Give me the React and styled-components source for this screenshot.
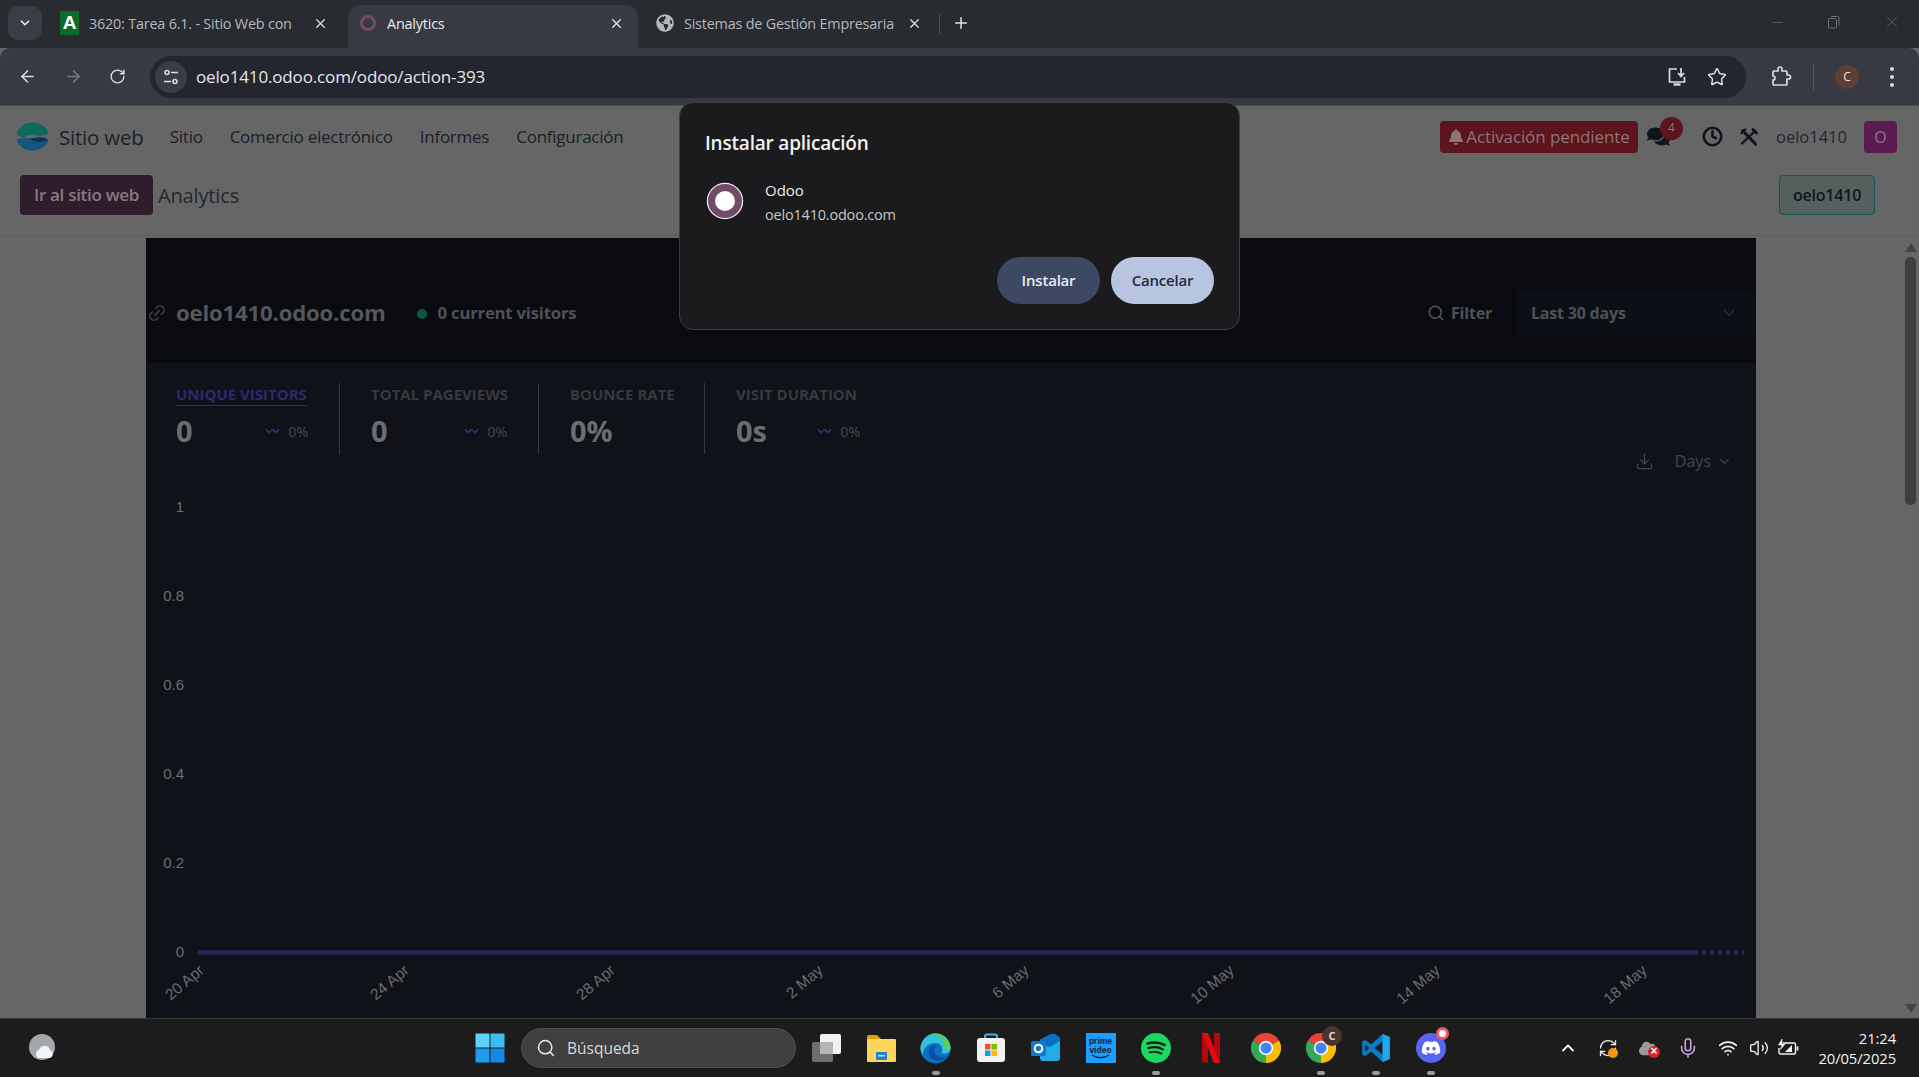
import React from "react";
import styled, { createGlobalStyle } from "styled-components";
import { ArrowLeft, ArrowRight, RotateCw, Star, X, Plus, ChevronDown, ChevronUp, Search, Download, Link2, Minus, Mic, Wifi, Volume2, RefreshCw } from "lucide-react";
import { FaBell, FaComments, FaGlobeAmericas, FaCloud, FaDiscord } from "react-icons/fa";
import { FiClock } from "react-icons/fi";

const GlobalStyle = createGlobalStyle`
    html, body, #root {
        margin: 0;
        height: 100%;
        overflow: hidden;
    }
    body {
        font-family: "Open Sans", "Noto Sans", sans-serif;
        background: #666;
    }
    * {
        box-sizing: border-box;
    }
`;

const DATES = [
    ["20 Apr", 59],
    ["24 Apr", 264],
    ["28 Apr", 470],
    ["2 May", 678],
    ["6 May", 884],
    ["10 May", 1089],
    ["14 May", 1295],
    ["18 May", 1502],
];
const TICKS = [
    ["1", 31],
    ["0.8", 120],
    ["0.6", 209],
    ["0.4", 298],
    ["0.2", 387],
    ["0", 476],
];

const WebsiteLogo = () => (
    <svg width="33" height="33" viewBox="0 0 32 32">
        <path d="M0.6 13A16 15 0 0 1 31.4 13C26 17 21 14.5 16 14.5 10 14.5 6 18 0.6 13Z" fill="#0d6a5e" />
        <path d="M1 13.4C5 16.6 8 16 11 15.2 8 16.6 5 17.4 1 13.4Z" fill="#0b3a3a" />
        <path d="M0.6 19.5C6 15.5 11 18 16 18 21 18 26 14.5 31.4 19.5A16 14 0 0 1 0.6 19.5Z" fill="#13577c" />
        <path d="M13 17.8C18 18.2 24 14.6 31.4 19.5 25 22.5 18 22 13 17.8Z" fill="#0e2f58" />
    </svg>
);
const TuneIcon = () => (
    <svg width="18" height="18" viewBox="0 0 18 18" fill="none" stroke="#d8dbe2" strokeWidth="1.6">
        <circle cx="5" cy="4.5" r="2" />
        <path d="M9 4.5h7M2 13.5h7" />
        <circle cx="13" cy="13.5" r="2" />
    </svg>
);
const InstallIcon = () => (
    <svg width="22" height="22" viewBox="0 0 22 22" fill="none" stroke="#d8dbe2" strokeWidth="1.7">
        <path d="M11 3H3.5v13h15v-5" />
        <path d="M15 2v8M12 7l3 3.4L18 7" />
        <path d="M7.5 18.5h7" strokeWidth="2.4" />
    </svg>
);
const ExtensionIcon = () => (
    <svg width="24" height="24" viewBox="0 0 24 24" fill="none" stroke="#d8dbe2" strokeWidth="1.7">
        <path d="M5 6h4V4a2 2 0 0 1 4 0v2h4a1 1 0 0 1 1 1v3h1.5a2 2 0 0 1 0 4H18v5a1 1 0 0 1-1 1H5a1 1 0 0 1-1-1v-4a2 2 0 0 0 0-4V7a1 1 0 0 1 1-1z" />
    </svg>
);
const RestoreIcon = () => (
    <svg width="14" height="14" viewBox="0 0 14 14" fill="none" stroke="#6d6f74" strokeWidth="1">
        <rect x="1.5" y="3.5" width="8" height="9.5" rx="1" />
        <path d="M4 1.5h6.5a1.5 1.5 0 0 1 1.5 1.5v7.5" />
    </svg>
);
const RingFavicon = () => (
    <svg width="18" height="18" viewBox="0 0 18 18" fill="none">
        <circle cx="9" cy="9" r="6.6" stroke="#714b67" strokeWidth="3" />
    </svg>
);
const AppIcon = () => (
    <svg width="38" height="38" viewBox="0 0 38 38">
        <circle cx="19" cy="19" r="18.2" fill="#f1eff0" />
        <circle cx="19" cy="19" r="17" fill="#714b67" />
        <circle cx="19" cy="19" r="10" fill="#fff" />
    </svg>
);
const ToolsIcon = () => (
    <svg width="20" height="20" viewBox="0 0 20 20" fill="none" stroke="#10141d" strokeLinecap="round">
        <path d="M5 5L16.500 17" strokeWidth="3.200" />
        <path d="M2.500 6.500L3.500 3.500 6.500 2.500" strokeWidth="2" />
        <path d="M15.500 4.500L3 16.500" strokeWidth="2.400" />
        <path d="M14 2.500L17.500 6" strokeWidth="3" />
    </svg>
);
const Squiggle = () => (
    <svg width="15" height="6" viewBox="0 0 15 6" fill="none" stroke="#3a2f78" strokeWidth="1.6">
        <path d="M1 1.5 L4 4.5 L7.5 1.5 L11 4.5 L14 1.5" />
    </svg>
);
const WeatherIcon = () => (
    <svg width="28" height="28" viewBox="0 0 28 28">
        <circle cx="14" cy="13" r="13" fill="#a4a7ad" />
        <path d="M10 24h11a4 4 0 0 0 1-7.8 5.5 5.5 0 0 0-10.5-1A5 5 0 0 0 10 24z" fill="#f2f3f5" />
    </svg>
);
const WindowsIcon = () => (
    <svg width="30" height="30" viewBox="0 0 30 30">
        <rect x="0.5" y="0.5" width="14" height="14" fill="#5fd3f7" />
        <rect x="15.5" y="0.5" width="14" height="14" fill="#3cbdf3" />
        <rect x="0.5" y="15.5" width="14" height="14" fill="#1e9bee" />
        <rect x="15.5" y="15.5" width="14" height="14" fill="#1489e6" />
    </svg>
);
const TaskViewIcon = () => (
    <svg width="30" height="30" viewBox="0 0 30 30">
        <rect x="1" y="9" width="21" height="20" rx="2" fill="#6e6e6e" />
        <rect x="9" y="1" width="21" height="20" rx="2" fill="#f1f1f1" />
        <rect x="9" y="9" width="13" height="12" fill="#b5b5b5" />
    </svg>
);
const FolderIcon = () => (
    <svg width="30" height="30" viewBox="0 0 30 30">
        <path d="M1 4a2 2 0 0 1 2-2h8l4 4v6H1z" fill="#e0a006" />
        <rect x="1" y="6" width="29" height="23" rx="1" fill="#fdd55a" />
        <rect x="11" y="19" width="19" height="8" fill="#fdd55a" />
        <rect x="10" y="19" width="11" height="8" rx="1" fill="#1b82d8" />
        <rect x="12" y="22" width="7" height="1.5" fill="#bfe2fb" />
    </svg>
);
const EdgeIcon = () => (
    <svg width="31" height="31" viewBox="0 0 32 32">
        <circle cx="16" cy="16" r="15.5" fill="#0f6fc5" />
        <path d="M0.5 16A15.5 15.5 0 0 1 31.5 16C31.5 21 26 22 22 21 25 17 22 9.5 14 10.5 7 11.5 3 16 3 23 1.5 21 0.5 18.500 0.5 16Z" fill="#33c2d6" />
        <path d="M31.5 16A15.5 15.5 0 0 0 10 1.600C18 0 26 5 24 13 26 18 31 18.500 31.500 16Z" fill="#5cd05c" />
        <path d="M9 20C9 15 13 12.500 17 13 14 14.500 13.500 19 16 22 19 25.500 25 25.500 28 24 22 32 9 29 9 20Z" fill="#0a4fa0" />
    </svg>
);
const StoreIcon = () => (
    <svg width="30" height="30" viewBox="0 0 30 30">
        <path d="M9 6V3.500A2 2 0 0 1 11 1.500h8a2 2 0 0 1 2 2V6" fill="none" stroke="#3fb5e8" strokeWidth="2" />
        <rect x="1" y="5" width="28" height="24" rx="3" fill="#f2f2f2" />
        <rect x="9" y="11" width="5.500" height="5.500" fill="#f25022" />
        <rect x="15.500" y="11" width="5.500" height="5.500" fill="#7fba00" />
        <rect x="9" y="17.500" width="5.500" height="5.500" fill="#00a4ef" />
        <rect x="15.500" y="17.500" width="5.500" height="5.500" fill="#ffb900" />
    </svg>
);
const OutlookIcon = () => (
    <svg width="31" height="30" viewBox="0 0 31 30">
        <path d="M10 7L21 1h4l5 4v20a3 3 0 0 1-3 3H13a3 3 0 0 1-3-3z" fill="#28a8ea" />
        <path d="M10 7L21 1h4l5 4v3L20 14 10 12z" fill="#0a6fc4" />
        <path d="M18 16l12-8v6l-12 8z" fill="#14b5e0" />
        <rect x="1" y="8" width="15" height="15" rx="1.500" fill="#0f78d4" />
        <circle cx="8.500" cy="15.500" r="3.800" fill="none" stroke="#fff" strokeWidth="2" />
    </svg>
);
const SpotifyIcon = () => (
    <svg width="30" height="30" viewBox="0 0 30 30" fill="none" stroke="#16201a" strokeLinecap="round">
        <circle cx="15" cy="15" r="15" fill="#1ed760" stroke="none" />
        <path d="M6.500 10.500c6-1.700 12-1.200 17 1.500" strokeWidth="2.600" />
        <path d="M7.500 15c5-1.300 10.500-.8 14.500 1.500" strokeWidth="2.200" />
        <path d="M8.500 19.300c4.500-1 8.500-.6 12 1.300" strokeWidth="1.800" />
    </svg>
);
const NetflixIcon = () => (
    <svg width="18" height="30" viewBox="0 0 18 30">
        <path d="M0 0h6v30L0 29z" fill="#b20710" />
        <path d="M12 0h6v29l-6 1z" fill="#b20710" />
        <path d="M0 0h6l12 30h-6z" fill="#e50914" />
    </svg>
);
const ChromeIcon = () => (
    <svg width="30" height="30" viewBox="0 0 48 48">
        <path d="M24 24L3.200 12A24 24 0 0 1 44.800 12Z" fill="#ea4335" />
        <path d="M24 24L44.800 12A24 24 0 0 1 24 48Z" fill="#fbbc04" />
        <path d="M24 24L24 48A24 24 0 0 1 3.200 12Z" fill="#34a853" />
        <circle cx="24" cy="24" r="11.500" fill="#fff" />
        <circle cx="24" cy="24" r="9" fill="#4285f4" />
    </svg>
);
const VsCodeIcon = () => (
    <svg width="30" height="30" viewBox="0 0 100 100">
        <path fillRule="evenodd" d="M72 3L96 13V87L72 97 34 62 14 77 4 72V28L14 23 34 38ZM72 29L44 50 72 71ZM14 37V63L27 50Z" fill="#0a7cc4" />
        <path d="M72 3L96 13V87L72 97Z" fill="#22a5ee" />
    </svg>
);
const BatteryIcon = () => (
    <svg width="22" height="20" viewBox="0 0 22 20" fill="none" stroke="#f2f2f2" strokeWidth="1.400">
        <path d="M6 5H17a1.500 1.500 0 0 1 1.500 1.500v8A1.500 1.500 0 0 1 17 16H3.500A1.500 1.500 0 0 1 2 14.500V10" />
        <path d="M20.500 8.500v4" strokeWidth="1.800" />
        <path d="M5 1L1.500 7h3.500L3.500 11.500 8 6H5z" fill="#f2f2f2" strokeWidth="0.600" />
        <path d="M8 14l7-7v7z" fill="#f2f2f2" stroke="none" />
    </svg>
);
const PrimeIcon = () => (
    <PrimeBox>
        <span>prime</span>
        <span>video</span>
        <svg width="20" height="5" viewBox="0 0 20 5" fill="none" stroke="#0f1e33" strokeWidth="1.200">
            <path d="M1 1c5 3.500 12 3.500 17 0" />
        </svg>
    </PrimeBox>
);
const DiscordIcon = () => (
    <DiscordCircle>
        <FaDiscord size={20} color="#fff" />
    </DiscordCircle>
);

const App = () => {
    return (
        <Screen>
            <GlobalStyle />
            <TabStrip>
                <TabScroller>
                    <ChevronDown size={14} strokeWidth={3} color="#e3e5ea" />
                </TabScroller>
                <Tab $width={299} $left={11} $right={20}>
                    <LetterFavicon>A</LetterFavicon>
                    <TabTitle>3620: Tarea 6.1. - Sitio Web con</TabTitle>
                    <X size={15} strokeWidth={2.2} color="#d8dbe2" />
                </Tab>
                <Tab $width={290} $left={11} $right={14} $active>
                    <RingFavicon />
                    <TabTitle $active>Analytics</TabTitle>
                    <X size={15} strokeWidth={2.2} color="#e3e5ea" />
                </Tab>
                <Tab $width={297} $left={18} $right={13}>
                    <FaGlobeAmericas size={18} color="#b4b7bd" />
                    <TabTitle>Sistemas de Gestión Empresaria</TabTitle>
                    <X size={15} strokeWidth={2.2} color="#d8dbe2" />
                </Tab>
                <TabDivider />
                <NewTab>
                    <Plus size={18} strokeWidth={2} color="#e3e5ea" />
                </NewTab>
                <WindowControls>
                    <Minus size={15} strokeWidth={1} color="#6d6f74" />
                    <RestoreIcon />
                    <X size={18} strokeWidth={1} color="#6d6f74" />
                </WindowControls>
            </TabStrip>

            <Toolbar>
                <NavIcons>
                    <ArrowLeft size={19} color="#d8dbe2" />
                    <ArrowRight size={19} color="#777a80" />
                    <RotateCw size={17} color="#d8dbe2" />
                </NavIcons>
                <Omnibox>
                    <TuneBadge>
                        <TuneIcon />
                    </TuneBadge>
                    <UrlText>oelo1410.odoo.com/odoo/action-393</UrlText>
                    <OmniActions>
                        <InstallIcon />
                        <Star size={20} color="#d8dbe2" strokeWidth={1.8} />
                    </OmniActions>
                </Omnibox>
                <ToolbarEnd>
                    <ExtensionIcon />
                    <ToolbarDivider />
                    <ProfileBadge>C</ProfileBadge>
                    <MenuDots>
                        <i />
                        <i />
                        <i />
                    </MenuDots>
                </ToolbarEnd>
            </Toolbar>

            <Page>
                <Navbar>
                    <WebsiteLogo />
                    <BrandName>Sitio web</BrandName>
                    <NavLink>Sitio</NavLink>
                    <NavLink>Comercio electrónico</NavLink>
                    <NavLink>Informes</NavLink>
                    <NavLink>Configuración</NavLink>
                    <NavEnd>
                        <PendingBadge>
                            <FaBell size={16} color="#8f7375" />
                            Activación pendiente
                        </PendingBadge>
                        <ChatIcon>
                            <FaComments size={23} color="#10141d" />
                            <ChatCount>4</ChatCount>
                        </ChatIcon>
                        <FiClock size={21} color="#10141d" strokeWidth={3} />
                        <ToolsIcon />
                        <UserName>oelo1410</UserName>
                        <UserAvatar>O</UserAvatar>
                    </NavEnd>
                </Navbar>

                <ControlPanel>
                    <GoButton>Ir al sitio web</GoButton>
                    <Crumb>Analytics</Crumb>
                    <SiteButton>oelo1410</SiteButton>
                </ControlPanel>

                <ContentArea>
                    <AnalyticsPanel>
                        <PanelHeader>
                            <Link2 size={20} color="#3c3e44" style={{ transform: "rotate(-45deg)" }} />
                            <SiteName>oelo1410.odoo.com</SiteName>
                            <LiveDot />
                            <Visitors>0 current visitors</Visitors>
                            <FilterButton>
                                <Search size={18} color="#54565b" />
                                Filter
                            </FilterButton>
                            <PeriodSelect>
                                Last 30 days
                                <ChevronDown size={18} strokeWidth={1.5} color="#2e3035" />
                            </PeriodSelect>
                        </PanelHeader>

                        <StatsCard>
                            <StatsBar>
                                <Stat $width={133} $first>
                                    <StatLabel $selected>UNIQUE VISITORS</StatLabel>
                                    <StatLine>
                                        <StatValue>0</StatValue>
                                        <StatDelta>
                                            <Squiggle />0%
                                        </StatDelta>
                                    </StatLine>
                                </Stat>
                                <Stat $width={137}>
                                    <StatLabel>TOTAL PAGEVIEWS</StatLabel>
                                    <StatLine>
                                        <StatValue>0</StatValue>
                                        <StatDelta>
                                            <Squiggle />0%
                                        </StatDelta>
                                    </StatLine>
                                </Stat>
                                <Stat $width={104}>
                                    <StatLabel>BOUNCE RATE</StatLabel>
                                    <StatLine>
                                        <StatValue>0%</StatValue>
                                    </StatLine>
                                </Stat>
                                <Stat $width={124} $last>
                                    <StatLabel>VISIT DURATION</StatLabel>
                                    <StatLine>
                                        <StatValue>0s</StatValue>
                                        <StatDelta>
                                            <Squiggle />0%
                                        </StatDelta>
                                    </StatLine>
                                </Stat>
                                <ChartTools>
                                    <Download size={19} strokeWidth={1.6} color="#44464b" />
                                    <IntervalLabel>Days</IntervalLabel>
                                    <ChevronDown size={15} color="#44464b" />
                                </ChartTools>
                            </StatsBar>

                            <svg width="1610" height="542" viewBox="0 0 1610 542" style={{ display: "block" }}>
                                {TICKS.map(([label, y]) => (
                                    <text key={label} x="38" y={y + 5} textAnchor="end" fontSize="15" fontFamily="Liberation Sans" fill="#6c6e72">
                                        {label}
                                    </text>
                                ))}
                                <line x1="52" y1="476.500" x2="1548" y2="476.500" stroke="#252a52" strokeWidth="4.500" />
                                <line x1="1548" y1="476.500" x2="1598" y2="476.500" stroke="#252a52" strokeWidth="4.500" strokeDasharray="4 4" />
                                {DATES.map(([label, x]) => (
                                    <text key={label} x={x} y="496" textAnchor="end" fontSize="15.500" fontFamily="Liberation Sans" fill="#6a6c70" transform={`rotate(-40 ${x} 496)`}>
                                        {label}
                                    </text>
                                ))}
                            </svg>
                        </StatsCard>
                    </AnalyticsPanel>

                    <Scrollbar>
                        <ScrollArrow $up />
                        <ScrollThumb />
                        <ScrollArrow />
                    </Scrollbar>
                </ContentArea>
            </Page>

            <Taskbar>
                <WeatherSlot>
                    <WeatherIcon />
                </WeatherSlot>
                <WindowsIcon />
                <SearchPill>
                    <Search size={20} color="#e6e6e6" strokeWidth={1.8} />
                    Búsqueda
                </SearchPill>
                <IconSlot>
                    <TaskViewIcon />
                </IconSlot>
                <IconSlot>
                    <FolderIcon />
                </IconSlot>
                <IconSlot>
                    <EdgeIcon />
                    <RunDot />
                </IconSlot>
                <IconSlot>
                    <StoreIcon />
                </IconSlot>
                <IconSlot>
                    <OutlookIcon />
                </IconSlot>
                <IconSlot>
                    <PrimeIcon />
                </IconSlot>
                <IconSlot>
                    <SpotifyIcon />
                    <RunDot />
                </IconSlot>
                <IconSlot>
                    <NetflixIcon />
                </IconSlot>
                <IconSlot>
                    <ChromeIcon />
                </IconSlot>
                <IconSlot>
                    <ChromeIcon />
                    <ProfilePip>C</ProfilePip>
                    <RunDot />
                </IconSlot>
                <IconSlot>
                    <VsCodeIcon />
                    <RunDot />
                </IconSlot>
                <IconSlot>
                    <DiscordIcon />
                    <AlertPip />
                    <RunDot />
                </IconSlot>

                <Tray>
                    <TraySlot $width={40}>
                        <ChevronUp size={20} strokeWidth={2.2} color="#f2f2f2" />
                    </TraySlot>
                    <TraySlot $width={40}>
                        <RefreshCw size={20} strokeWidth={1.5} color="#f2f2f2" />
                        <SyncDot />
                    </TraySlot>
                    <TraySlot $width={40}>
                        <FaCloud size={19} color="#9a9a9a" />
                        <ErrorPip>×</ErrorPip>
                    </TraySlot>
                    <TraySlot $width={40}>
                        <Mic size={22} strokeWidth={1.7} color="#c9a3de" />
                    </TraySlot>
                    <TraySlot $width={40}>
                        <Wifi size={20} strokeWidth={2} color="#f2f2f2" />
                    </TraySlot>
                    <TraySlot $width={22}>
                        <Volume2 size={20} strokeWidth={1.6} color="#f2f2f2" />
                    </TraySlot>
                    <TraySlot $width={36}>
                        <BatteryIcon />
                    </TraySlot>
                    <Clock>
                        <span>21:24</span>
                        <span>20/05/2025</span>
                    </Clock>
                </Tray>
            </Taskbar>

            <InstallDialog>
                <DialogTitle>Instalar aplicación</DialogTitle>
                <AppRow>
                    <AppIcon />
                    <AppText>
                        <AppName>Odoo</AppName>
                        <AppHost>oelo1410.odoo.com</AppHost>
                    </AppText>
                </AppRow>
                <DialogActions>
                    <DialogButton>Instalar</DialogButton>
                    <DialogButton $light>Cancelar</DialogButton>
                </DialogActions>
            </InstallDialog>
        </Screen>
    );
};

export default App;

const Screen = styled.div`
    position: relative;
    width: 100vw;
    height: 100vh;
    display: flex;
    flex-direction: column;
    overflow: hidden;
`;

/* browser chrome */
const TabStrip = styled.div`
    height: 48px;
    flex: none;
    background: #282b30;
    display: flex;
    align-items: flex-end;
    padding-left: 8px;
`;
const TabScroller = styled.div`
    width: 34px;
    height: 34px;
    margin-bottom: 8px;
    margin-right: 7px;
    border-radius: 10px;
    background: #3a3d45;
    display: grid;
    place-items: center;
`;
const Tab = styled.div`
    width: ${(props) => props.$width}px;
    height: 43px;
    padding: 0 ${(props) => props.$right}px 7px ${(props) => props.$left}px;
    display: flex;
    align-items: center;
    gap: 10px;
    border-radius: 12px 12px 0 0;
    background: ${(props) => (props.$active ? "#373a43" : "transparent")};
`;
const LetterFavicon = styled.span`
    width: 19px;
    height: 24px;
    flex: none;
    background: #0d6b2a;
    color: #fff;
    font: 700 19px/24px "Liberation Sans", sans-serif;
    text-align: center;
`;
const TabTitle = styled.span`
    flex: 1;
    min-width: 0;
    font-size: 14.400px;
    letter-spacing: -0.2px;
    white-space: nowrap;
    color: ${(props) => (props.$active ? "#e8eaed" : "#b4b7bd")};
`;
const TabDivider = styled.div`
    width: 1px;
    height: 20px;
    margin: 0 0 14px 4px;
    background: #4a4d54;
`;
const NewTab = styled.div`
    height: 43px;
    padding: 0 0 7px 12px;
    display: flex;
    align-items: center;
`;
const WindowControls = styled.div`
    margin-left: auto;
    height: 48px;
    padding: 0 18px 4px 0;
    display: flex;
    align-items: center;
    gap: 42px;
`;
const Toolbar = styled.div`
    height: 58px;
    flex: none;
    background: #373a43;
    border-radius: 10px 10px 0 0;
    display: flex;
    align-items: center;
    border-bottom: 1px solid #4b4c50;
`;
const NavIcons = styled.div`
    width: 150px;
    flex: none;
    padding: 0 24px 0 18px;
    display: flex;
    align-items: center;
    justify-content: space-between;
`;
const Omnibox = styled.div`
    width: 1596px;
    height: 42px;
    flex: none;
    border-radius: 21px;
    background: #23262e;
    display: flex;
    align-items: center;
    padding-left: 5px;
`;
const TuneBadge = styled.div`
    width: 32px;
    height: 32px;
    border-radius: 50%;
    background: #3a3d46;
    display: grid;
    place-items: center;
`;
const UrlText = styled.span`
    margin-left: 9px;
    font-size: 17px;
    letter-spacing: -0.15px;
    color: #e3e5ea;
`;
const OmniActions = styled.div`
    margin-left: auto;
    padding-right: 19px;
    display: flex;
    align-items: center;
    gap: 19px;
`;
const ToolbarEnd = styled.div`
    flex: 1;
    padding: 0 22px 0 23px;
    display: flex;
    align-items: center;
`;
const ToolbarDivider = styled.div`
    width: 1px;
    height: 26px;
    margin: 0 21px 0 20px;
    background: #55575d;
`;
const ProfileBadge = styled.div`
    width: 24px;
    height: 24px;
    border-radius: 50%;
    background: #5d3f35;
    color: #e8e2df;
    font-size: 12px;
    line-height: 24px;
    text-align: center;
`;
const MenuDots = styled.div`
    margin-left: 31px;
    display: flex;
    flex-direction: column;
    gap: 4px;
    i {
        width: 4px;
        height: 4px;
        border-radius: 50%;
        background: #d8dbe2;
    }
`;

/* odoo page, dimmed */
const Page = styled.div`
    flex: 1;
    min-height: 0;
    display: flex;
    flex-direction: column;
    background: #666;
`;
const Navbar = styled.div`
    height: 61px;
    flex: none;
    display: flex;
    align-items: center;
    padding: 0 22px 0 16px;
    font-size: 17px;
    color: #1b1f28;
`;
const BrandName = styled.span`
    margin: 0 26px 0 10px;
    font-size: 20.500px;
    letter-spacing: -0.2px;
`;
const NavLink = styled.span`
    margin-right: 27px;
    letter-spacing: -0.25px;
`;
const NavEnd = styled.div`
    margin-left: auto;
    display: flex;
    align-items: center;
    svg + svg {
        margin-left: 16px;
    }
`;
const PendingBadge = styled.div`
    width: 198px;
    height: 32px;
    border-radius: 4px;
    background: #5c151c;
    color: #8f7375;
    display: flex;
    align-items: center;
    justify-content: center;
    gap: 2px;
    font-size: 17px;
    letter-spacing: -0.1px;
    white-space: nowrap;
`;
const ChatIcon = styled.div`
    position: relative;
    width: 44px;
    height: 24px;
    margin-left: 9px;
    margin-right: 11px;
`;
const ChatCount = styled.span`
    position: absolute;
    left: 13px;
    top: -8px;
    width: 23px;
    height: 23px;
    border-radius: 50%;
    background: #5c151c;
    color: #8f7375;
    font-size: 12px;
    line-height: 22px;
    text-align: center;
`;
const UserName = styled.span`
    margin: 0 17px 0 17px;
    font-size: 16.500px;
    color: #22262e;
`;
const UserAvatar = styled.div`
    width: 33px;
    height: 32px;
    border-radius: 4px;
    background: #5a1c50;
    color: #8f7489;
    font-size: 16px;
    line-height: 32px;
    text-align: center;
`;
const ControlPanel = styled.div`
    height: 69px;
    flex: none;
    padding: 8px 44px 0 20px;
    border-bottom: 1px solid #5f5f5f;
    display: flex;
    align-items: flex-start;
`;
const GoButton = styled.div`
    width: 133px;
    height: 40px;
    border-radius: 4px;
    background: #2f1d2c;
    color: #857a83;
    font-size: 17px;
    font-weight: 600;
    line-height: 40px;
    text-align: center;
    white-space: nowrap;
    letter-spacing: -0.3px;
`;
const Crumb = styled.span`
    margin-left: 5px;
    font-size: 20px;
    line-height: 41px;
    color: #22262e;
    letter-spacing: -0.15px;
`;
const SiteButton = styled.div`
    margin-left: auto;
    width: 96px;
    height: 40px;
    border-radius: 4px;
    border: 1px solid #0d5a56;
    background: #545f5e;
    color: #12151c;
    font-size: 16px;
    font-weight: 600;
    line-height: 38px;
    text-align: center;
    letter-spacing: -0.2px;
`;
const ContentArea = styled.div`
    flex: 1;
    min-height: 0;
    margin-top: 2px;
    padding-left: 146px;
    display: flex;
    justify-content: space-between;
`;
const AnalyticsPanel = styled.div`
    width: 1610px;
    background: #090b10;
    overflow: hidden;
`;
const PanelHeader = styled.div`
    height: 125px;
    padding: 52px 0 28px 1px;
    display: flex;
    align-items: center;
`;
const SiteName = styled.span`
    margin-left: 9px;
    font-size: 22.200px;
    font-weight: 700;
    color: #55575b;
    letter-spacing: -0.2px;
    white-space: nowrap;
`;
const LiveDot = styled.span`
    width: 10px;
    height: 10px;
    margin: 3px 11px 0 31px;
    border-radius: 50%;
    background: #0b5a40;
`;
const Visitors = styled.span`
    font-size: 16.700px;
    font-weight: 700;
    color: #4f5155;
    letter-spacing: -0.2px;
`;
const FilterButton = styled.div`
    margin-left: auto;
    display: flex;
    align-items: center;
    gap: 6px;
    font-size: 16px;
    font-weight: 700;
    color: #4f5155;
    letter-spacing: -0.2px;
`;
const PeriodSelect = styled.div`
    width: 240px;
    height: 44px;
    margin-left: 24px;
    padding: 0 18px 0 15px;
    border-radius: 4px 0 0 4px;
    background: #0c0f15;
    display: flex;
    align-items: center;
    justify-content: space-between;
    font-size: 16px;
    font-weight: 700;
    color: #4f5155;
    letter-spacing: -0.2px;
`;
const StatsCard = styled.div`
    background: #0f1219;
`;
const StatsBar = styled.div`
    height: 113px;
    padding: 20px 24px 0 30px;
    display: flex;
    align-items: flex-start;
`;
const Stat = styled.div`
    width: ${(props) => props.$width + (props.$first ? 31 : 62)}px;
    height: 71px;
    padding: ${(props) => (props.$first ? "0 31px 0 0" : "0 31px")};
    border-right: ${(props) => (props.$last ? "none" : "1px solid #38393e")};
`;
const StatLabel = styled.div`
    display: inline-block;
    height: 21px;
    font-size: 15px;
    font-weight: 700;
    line-height: 19px;
    white-space: nowrap;
    color: ${(props) => (props.$selected ? "#2b2a6c" : "#37393f")};
    border-bottom: ${(props) => (props.$selected ? "1px solid #2b2a6c" : "none")};
`;
const StatLine = styled.div`
    margin-top: 5px;
    display: flex;
    align-items: center;
    justify-content: space-between;
`;
const StatValue = styled.span`
    font-size: 29px;
    font-weight: 700;
    line-height: 40px;
    color: #6c6d70;
`;
const StatDelta = styled.span`
    display: flex;
    align-items: center;
    gap: 8px;
    font-size: 14.500px;
    color: #46484d;
    letter-spacing: -0.3px;
`;
const ChartTools = styled.div`
    margin-left: auto;
    align-self: flex-end;
    height: 30px;
    display: flex;
    align-items: center;
`;
const IntervalLabel = styled.span`
    margin: 0 6px 0 21px;
    font-size: 16px;
    color: #45474e;
`;
const Scrollbar = styled.div`
    width: 17px;
    display: flex;
    flex-direction: column;
    align-items: center;
    justify-content: space-between;
    padding: 5px 0;
    position: relative;
`;
const ScrollArrow = styled.div`
    width: 0;
    height: 0;
    border-left: 6px solid transparent;
    border-right: 6px solid transparent;
    ${(props) => (props.$up ? "border-bottom: 9px solid #444;" : "border-top: 9px solid #444;")}
`;
const ScrollThumb = styled.div`
    position: absolute;
    top: 19px;
    left: 3px;
    width: 11px;
    height: 248px;
    border-radius: 5px;
    background: #3f3f3f;
`;

/* taskbar */
const Taskbar = styled.div`
    height: 59px;
    flex: none;
    background: #1c1c1c;
    border-top: 1px solid #33363b;
    display: flex;
    align-items: center;
    color: #f2f2f2;
`;
const WeatherSlot = styled.div`
    width: 475px;
    flex: none;
    padding-left: 28px;
    display: flex;
    align-items: center;
`;
const SearchPill = styled.div`
    width: 275px;
    height: 40px;
    margin: 0 2px 0 16px;
    padding-left: 14px;
    border-radius: 20px;
    background: #404040;
    border: 1px solid #4c4c4c;
    display: flex;
    align-items: center;
    gap: 11px;
    font-size: 15.500px;
    color: #d8d8d8;
`;
const IconSlot = styled.div`
    position: relative;
    width: 55px;
    height: 58px;
    flex: none;
    display: grid;
    place-items: center;
`;
const RunDot = styled.span`
    position: absolute;
    left: 24px;
    bottom: 2px;
    width: 8px;
    height: 4px;
    border-radius: 2px;
    background: #9a9a9a;
`;
const PrimeBox = styled.div`
    width: 30px;
    height: 30px;
    background: #1c9dff;
    color: #0f1e33;
    display: flex;
    flex-direction: column;
    align-items: center;
    font: 700 8.500px/8.500px "Liberation Sans", sans-serif;
    padding-top: 4px;
`;
const DiscordCircle = styled.div`
    width: 30px;
    height: 30px;
    border-radius: 50%;
    background: #5865f2;
    display: grid;
    place-items: center;
`;
const ProfilePip = styled.span`
    position: absolute;
    left: 29px;
    top: 7px;
    width: 20px;
    height: 20px;
    border-radius: 50%;
    background: #4a342c;
    color: #e0d8d4;
    font-size: 11px;
    font-weight: 700;
    line-height: 20px;
    text-align: center;
`;
const AlertPip = styled.span`
    position: absolute;
    left: 33px;
    top: 8px;
    width: 13px;
    height: 13px;
    border-radius: 50%;
    background: #fff;
    border: 3px solid #ef5a5f;
`;
const Tray = styled.div`
    margin-left: auto;
    padding-right: 23px;
    display: flex;
    align-items: center;
`;
const TraySlot = styled.div`
    position: relative;
    width: ${(props) => props.$width}px;
    height: 30px;
    display: grid;
    place-items: center;
`;
const SyncDot = styled.span`
    position: absolute;
    left: 20px;
    top: 15px;
    width: 10px;
    height: 10px;
    border-radius: 50%;
    background: #f7960e;
`;
const ErrorPip = styled.span`
    position: absolute;
    left: 20px;
    top: 13px;
    width: 12px;
    height: 12px;
    border-radius: 50%;
    background: #d3202c;
    color: #fff;
    font: 700 12px/11px "Liberation Sans", sans-serif;
    text-align: center;
`;
const Clock = styled.div`
    width: 90px;
    display: flex;
    flex-direction: column;
    align-items: flex-end;
    gap: 2px;
    font-size: 14.800px;
    line-height: 18px;
    letter-spacing: -0.1px;
`;

/* install dialog, sits over the page */
const InstallDialog = styled.div`
    position: absolute;
    left: 679px;
    top: 102px;
    width: 561px;
    height: 228px;
    padding: 27px 25px 0 25px;
    border-radius: 14px;
    background: #1b1b1d;
    border: 1px solid #3c3d3f;
    color: #f1f1f1;
`;
const DialogTitle = styled.div`
    font-size: 19px;
    font-weight: 600;
    line-height: 26px;
    letter-spacing: -0.2px;
`;
const AppRow = styled.div`
    margin: 24px 0 0 1px;
    display: flex;
    align-items: flex-start;
    gap: 21px;
    svg {
        margin-top: 2px;
    }
`;
const AppText = styled.div`
    display: flex;
    flex-direction: column;
    gap: 5px;
`;
const AppName = styled.span`
    font-size: 15px;
    line-height: 20px;
    color: #ececec;
`;
const AppHost = styled.span`
    font-size: 14.500px;
    line-height: 20px;
    letter-spacing: -0.2px;
    color: #c4c7ce;
`;
const DialogActions = styled.div`
    margin-top: 32px;
    display: flex;
    justify-content: flex-end;
    gap: 11px;
`;
const DialogButton = styled.div`
    width: 103px;
    height: 47px;
    border-radius: 24px;
    background: ${(props) => (props.$light ? "#b7c5e0" : "#3d4962")};
    color: ${(props) => (props.$light ? "#222b3f" : "#e8ebf2")};
    font-size: 15px;
    font-weight: 600;
    line-height: 46px;
    text-align: center;
    letter-spacing: -0.2px;
`;
